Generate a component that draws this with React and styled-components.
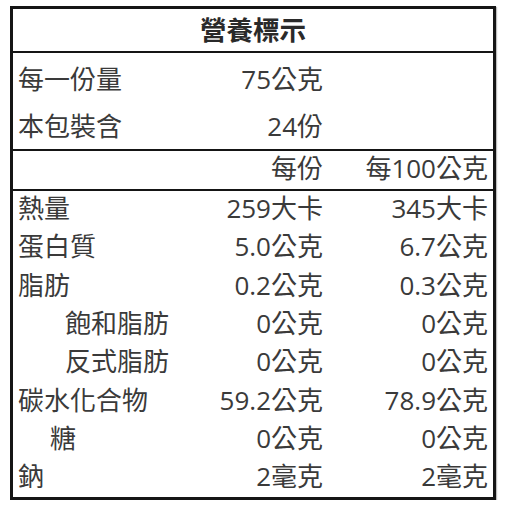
import styled, { createGlobalStyle } from "styled-components";

const GlobalStyle = createGlobalStyle`
    body {
        margin: 0;
        background: #fff;
        font-family: "Open Sans", "Noto Sans CJK TC", sans-serif;
        color: #3a3a3a;
    }
`;

const Page = styled.div`
    padding: 6px 0 0 10px;
`;

const Label = styled.div`
    width: 486px;
    box-sizing: border-box;
    border: 3px solid #151515;
    box-shadow: 1px 1px 1px rgba(0, 0, 0, 0.25);
`;

const Title = styled.div`
    height: 44px;
    display: flex;
    align-items: center;
    justify-content: center;
    font-family: "Noto Sans CJK TC", sans-serif;
    font-size: 26.5px;
    font-weight: bold;
    color: #2a2a2a;
    border-bottom: 2px solid #151515;
    padding-bottom: 3px;
    box-sizing: border-box;
`;

const Section = styled.div`
    padding: ${(p) => p.$pad || "0"};
    border-bottom: ${(p) => (p.$last ? "none" : "2px solid #151515")};
`;

const Row = styled.div`
    display: grid;
    grid-template-columns: 185px 130px 165px;
    height: ${(p) => p.$h}px;
    padding-bottom: ${(p) => p.$shift || 0}px;
    box-sizing: border-box;
    align-items: center;
    font-size: 26px;
    line-height: 1;
`;

const Name = styled.span`
    padding-left: ${(p) => 5 + (p.$indent || 0)}px;
    white-space: nowrap;
`;

const Value = styled.span`
    text-align: right;
    padding-right: 5px;
    white-space: nowrap;
`;

const nutrients = [
    ["熱量", 0, "259大卡", "345大卡"],
    ["蛋白質", 0, "5.0公克", "6.7公克"],
    ["脂肪", 0, "0.2公克", "0.3公克"],
    ["飽和脂肪", 47, "0公克", "0公克"],
    ["反式脂肪", 47, "0公克", "0公克"],
    ["碳水化合物", 0, "59.2公克", "78.9公克"],
    ["糖", 32, "0公克", "0公克"],
    ["鈉", 0, "2毫克", "2毫克"],
];

export default function App() {
    return (
        <Page>
            <GlobalStyle />
            <Label>
                <Title>營養標示</Title>
                <Section $pad="4px 0 0">
                    <Row $h={46} $shift={2}>
                        <Name>每一份量</Name>
                        <Value>75公克</Value>
                        <span />
                    </Row>
                    <Row $h={46} $shift={0}>
                        <Name>本包裝含</Name>
                        <Value>24份</Value>
                        <span />
                    </Row>
                </Section>
                <Section>
                    <Row $h={38} $shift={5}>
                        <span />
                        <Value>每份</Value>
                        <Value>每100公克</Value>
                    </Row>
                </Section>
                <Section $last>
                    {nutrients.map(([name, indent, a, b]) => (
                        <Row $h={38.3} $shift={4} key={name}>
                            <Name $indent={indent}>{name}</Name>
                            <Value>{a}</Value>
                            <Value>{b}</Value>
                        </Row>
                    ))}
                </Section>
            </Label>
        </Page>
    );
}
